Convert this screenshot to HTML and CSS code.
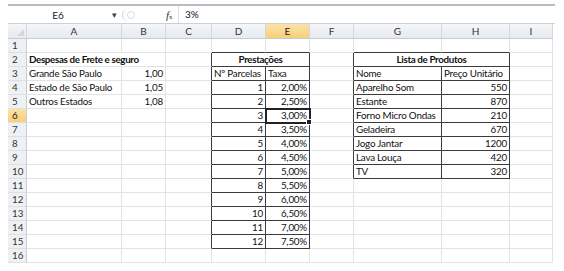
FILE: index.html
```html
<!DOCTYPE html>
<html lang="pt-BR">
<head>
    <meta charset="UTF-8">
    <title>Planilha - Prestações</title>
    <link rel="stylesheet" href="styles.css">
</head>
<body>
<div class="excel">
    <!-- Formula bar -->
    <div class="formula-bar">
        <div class="name-box">E6</div>
        <div class="name-arrow">▾</div>
        <div class="grip"><span class="grip-dot"></span></div>
        <div class="fx"><i>f</i><small>x</small></div>
        <div class="formula">3%</div>
    </div>

    <!-- Sheet -->
    <table class="sheet">
        <colgroup>
            <col class="w-head">
            <col class="w-a">
            <col class="w-b">
            <col class="w-c">
            <col class="w-d">
            <col class="w-e">
            <col class="w-f">
            <col class="w-g">
            <col class="w-h">
            <col class="w-i">
        </colgroup>
        <thead>
            <tr>
                <th class="corner"><span class="corner-tri"></span></th>
                <th>A</th><th>B</th><th>C</th><th>D</th><th class="active">E</th><th>F</th><th>G</th><th>H</th><th>I</th>
            </tr>
        </thead>
        <tbody>
            <tr>
                <th>1</th>
                <td></td><td></td><td></td><td class="tb"></td><td class="tb"></td><td></td><td class="tb"></td><td class="tb"></td><td></td>
            </tr>
            <tr>
                <th>2</th>
                <td colspan="2" class="bold">Despesas de Frete e seguro</td><td class="lb"></td>
                <td colspan="2" class="b bold center">Prestações</td><td class="lb"></td>
                <td colspan="2" class="b bold center">Lista de Produtos</td><td></td>
            </tr>
            <tr>
                <th>3</th>
                <td>Grande São Paulo</td><td class="num">1,00</td><td class="lb"></td>
                <td class="b">Nº Parcelas</td><td class="b">Taxa</td><td class="lb"></td>
                <td class="b">Nome</td><td class="b">Preço Unitário</td><td></td>
            </tr>
            <tr>
                <th>4</th>
                <td>Estado de São Paulo</td><td class="num">1,05</td><td class="lb"></td>
                <td class="b num">1</td><td class="b num">2,00%</td><td class="lb"></td>
                <td class="b">Aparelho Som</td><td class="b num">550</td><td></td>
            </tr>
            <tr>
                <th>5</th>
                <td>Outros Estados</td><td class="num">1,08</td><td class="lb"></td>
                <td class="b num">2</td><td class="b num">2,50%</td><td class="lb"></td>
                <td class="b">Estante</td><td class="b num">870</td><td></td>
            </tr>
            <tr>
                <th class="active">6</th>
                <td></td><td></td><td class="lb"></td>
                <td class="b num">3</td><td class="b num sel">3,00%</td><td class="lb"></td>
                <td class="b">Forno Micro Ondas</td><td class="b num">210</td><td></td>
            </tr>
            <tr>
                <th>7</th>
                <td></td><td></td><td class="lb"></td>
                <td class="b num">4</td><td class="b num">3,50%</td><td class="lb"></td>
                <td class="b">Geladeira</td><td class="b num">670</td><td></td>
            </tr>
            <tr>
                <th>8</th>
                <td></td><td></td><td class="lb"></td>
                <td class="b num">5</td><td class="b num">4,00%</td><td class="lb"></td>
                <td class="b">Jogo Jantar</td><td class="b num">1200</td><td></td>
            </tr>
            <tr>
                <th>9</th>
                <td></td><td></td><td class="lb"></td>
                <td class="b num">6</td><td class="b num">4,50%</td><td class="lb"></td>
                <td class="b">Lava Louça</td><td class="b num">420</td><td></td>
            </tr>
            <tr>
                <th>10</th>
                <td></td><td></td><td class="lb"></td>
                <td class="b num">7</td><td class="b num">5,00%</td><td class="lb"></td>
                <td class="b">TV</td><td class="b num">320</td><td></td>
            </tr>
            <tr>
                <th>11</th>
                <td></td><td></td><td class="lb"></td>
                <td class="b num">8</td><td class="b num">5,50%</td><td></td>
                <td></td><td></td><td></td>
            </tr>
            <tr>
                <th>12</th>
                <td></td><td></td><td class="lb"></td>
                <td class="b num">9</td><td class="b num">6,00%</td><td></td>
                <td></td><td></td><td></td>
            </tr>
            <tr>
                <th>13</th>
                <td></td><td></td><td class="lb"></td>
                <td class="b num">10</td><td class="b num">6,50%</td><td></td>
                <td></td><td></td><td></td>
            </tr>
            <tr>
                <th>14</th>
                <td></td><td></td><td class="lb"></td>
                <td class="b num">11</td><td class="b num">7,00%</td><td></td>
                <td></td><td></td><td></td>
            </tr>
            <tr>
                <th>15</th>
                <td></td><td></td><td class="lb"></td>
                <td class="b num">12</td><td class="b num">7,50%</td><td></td>
                <td></td><td></td><td></td>
            </tr>
            <tr>
                <th>16</th>
                <td></td><td></td><td></td><td></td><td></td><td></td><td></td><td></td><td></td>
            </tr>
        </tbody>
    </table>
</div>
</body>
</html>
```

FILE: styles.css
```css
body {
    margin: 0;
    background: #fff;
    font-family: Lato, "Open Sans", sans-serif;
    color: #000;
}
.excel {
    width: 547px;
    padding: 4px 0 0 8px;
}

/* formula bar */
.formula-bar {
    display: flex;
    align-items: center;
    height: 17px;
    border-top: 2px solid #b9bdc3;
    border-bottom: 1px solid #ccd1d8;
    font-size: 10px;
}
.name-box {
    width: 100px;
    text-align: center;
    color: #222;
}
.name-arrow {
    width: 12px;
    font-size: 9px;
    color: #444;
    text-align: center;
}
.grip {
    width: 43px;
    height: 12px;
    margin-left: 2px;
    border-left: 1px solid #c9ced5;
    border-radius: 7px 0 0 7px;
    position: relative;
}
.grip-dot {
    position: absolute;
    left: 4px;
    top: 2px;
    width: 6px;
    height: 6px;
    border: 1px solid #d6dbe1;
    border-radius: 50%;
}
.fx {
    width: 12px;
    font-family: "Liberation Serif", serif;
    font-size: 11px;
    color: #333;
}
.fx small {
    font-size: 7px;
}
.formula {
    flex: 1;
    height: 17px;
    line-height: 17px;
    padding-left: 6px;
    border-left: 1px solid #dde1e6;
    color: #111;
}

/* sheet */
.sheet {
    border-collapse: separate;
    border-spacing: 0;
    table-layout: fixed;
    width: 545px;
    font-size: 9.8px;
    letter-spacing: -0.2px;
    color: #111;
}
.w-head { width: 19px; }
.w-a { width: 95px; }
.w-b { width: 44px; }
.w-c { width: 46px; }
.w-d { width: 54px; }
.w-e { width: 44px; }
.w-f { width: 44px; }
.w-g { width: 88px; }
.w-h { width: 68px; }
.w-i { width: 43px; }

.sheet th {
    padding: 0;
    font-weight: normal;
    color: #333;
    letter-spacing: 0;
    background: linear-gradient(#f4f6f8, #e6eaee);
    border-right: 1px solid #d3d8de;
    border-bottom: 1px solid #c6ccd3;
}
.sheet thead th {
    height: 14px;
    line-height: 14px;
    font-size: 10px;
    text-align: center;
}
.sheet tbody th {
    height: 13px;
    line-height: 13px;
    text-align: left;
    padding-left: 4px;
    font-size: 9.8px;
    background: #eef1f4;
    border-bottom-color: #dde1e6;
    border-right-color: #c6ccd3;
}
.sheet th.active {
    background: linear-gradient(#fbe2a8, #f8cf79);
    color: #222;
}
.sheet th.corner {
    position: relative;
}
.corner-tri {
    position: absolute;
    right: 2px;
    bottom: 2px;
    width: 0;
    height: 0;
    border-left: 7px solid transparent;
    border-bottom: 7px solid #d3d8de;
}

.sheet td {
    height: 13px;
    line-height: 13px;
    padding: 0 2px;
    white-space: nowrap;
    overflow: hidden;
    border-right: 1px solid #e1e3e5;
    border-bottom: 1px solid #e1e3e5;
}
.sheet td.b {
    border-right-color: #3c3c3c;
    border-bottom-color: #3c3c3c;
}
.sheet td.lb {
    border-right-color: #3c3c3c;
}
.sheet td.tb {
    border-bottom-color: #3c3c3c;
}
.bold {
    font-weight: bold;
    letter-spacing: -0.35px;
}
.center { text-align: center; }
.num { text-align: right; }

.sheet td.sel {
    position: relative;
    overflow: visible;
    outline: 2px solid #222;
    outline-offset: -1px;
}
.sheet td.sel::after {
    content: "";
    position: absolute;
    right: -3px;
    bottom: -3px;
    width: 4px;
    height: 4px;
    background: #222;
    border: 1px solid #fff;
}
```
